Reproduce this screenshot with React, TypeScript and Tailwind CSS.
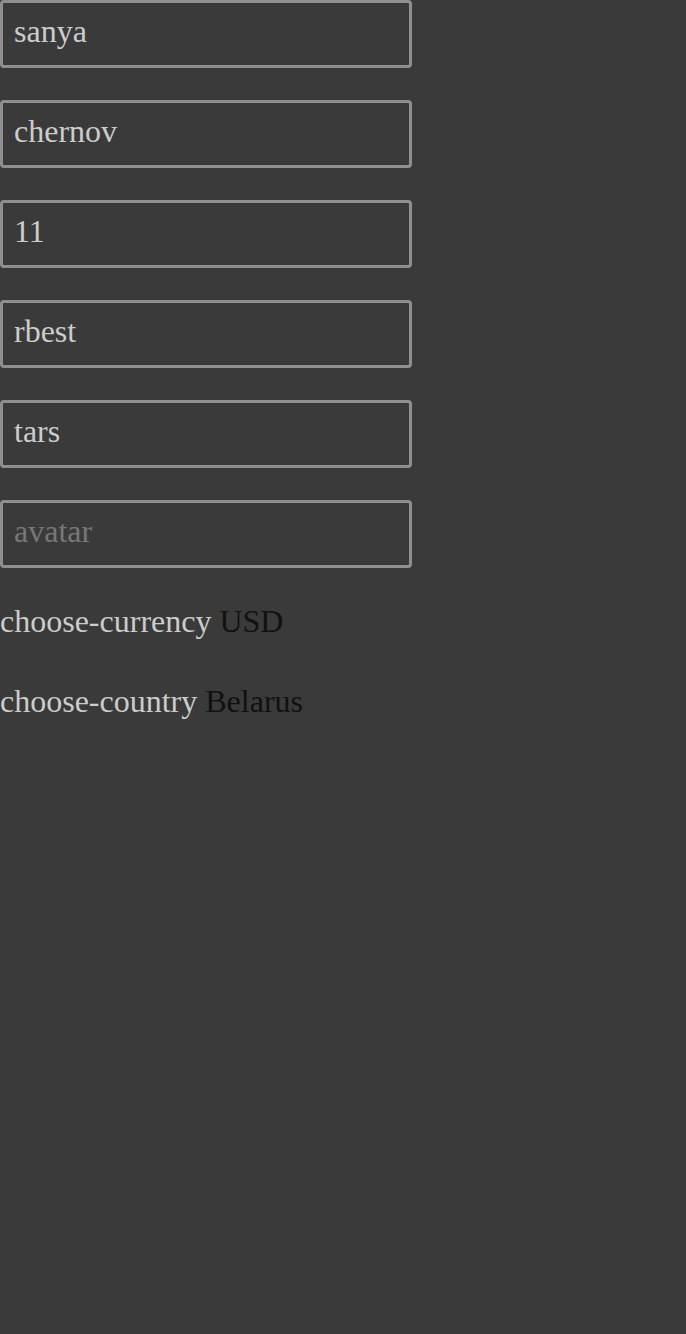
import { useState } from 'react';

const fields = [
  { name: 'name', value: 'sanya' },
  { name: 'surname', value: 'chernov' },
  { name: 'age', value: '11' },
  { name: 'login', value: 'rbest' },
  { name: 'password', value: 'tars' },
  { name: 'avatar', value: '', placeholder: 'avatar' },
];

export default function App() {
  const [values, setValues] = useState(fields.map(f => f.value));

  return (
    <div className="min-h-screen bg-[#3a3a3a] font-['Liberation_Serif'] text-[32px] text-[#cccccc]">
      <div className="flex flex-col gap-[32px]">
        {fields.map((f, i) => (
          <input
            key={f.name}
            type="text"
            value={values[i]}
            placeholder={f.placeholder}
            onChange={e => setValues(v => v.map((x, j) => (j === i ? e.target.value : x)))}
            className="h-[68px] w-[412px] rounded-[4px] border-[3px] border-[#8f8f8f] bg-transparent px-[11px] pb-[6px] text-[32px] text-[#cccccc] outline-none placeholder:text-[#777777]"
          />
        ))}
      </div>

      <div className="mt-[37px] leading-[32px]">
        choose-currency <span className="text-[#111111]">USD</span>
      </div>
      <div className="mt-[48px] leading-[32px]">
        choose-country <span className="text-[#111111]">Belarus</span>
      </div>
    </div>
  );
}
